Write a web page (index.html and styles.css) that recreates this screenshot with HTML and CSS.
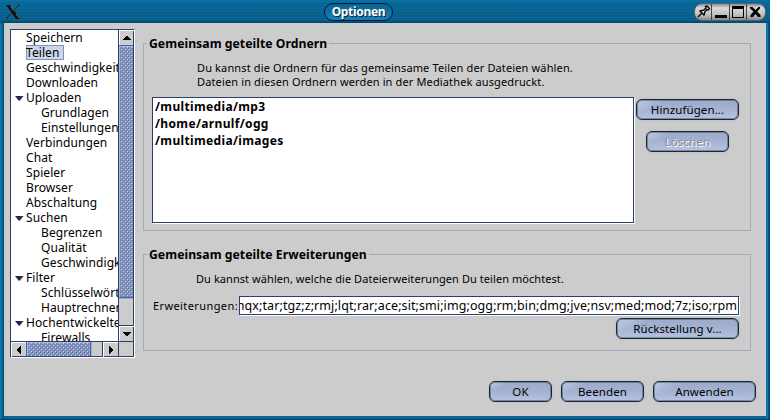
FILE: index.html
```html
<!DOCTYPE html>
<html lang="de">
<head>
<meta charset="utf-8">
<title>Optionen</title>
<link rel="stylesheet" href="styles.css">
</head>
<body>
<div class="window">
  <header class="titlebar">
    <svg class="xlogo" width="14" height="14" viewBox="0 0 14 14"><path d="M0 0h4l10 14h-4z" fill="#111"/><path d="M13 0L8.500 5.500M5.500 8.500L1 13.500" stroke="#111" stroke-width="1.300" fill="none"/><path d="M4.500 1L8 6M1.500 13.500L5.500 9M12.500 1L9 5M10 9l3 4" stroke="#8a8280" stroke-width=".7" fill="none"/></svg>
    <h1 class="title">Optionen</h1>
    <div class="controls">
      <span class="control pin"><svg width="15" height="15" viewBox="0 0 15 15"><path d="M2 13L6 9M3.500 6.500l5 5M4.500 7L8 6l2-2L9.500 2.500 11 2l2.500 2.500-1 1.500-1.500-.5-2 2L8 11" fill="#ddd" stroke="#000" stroke-width="1.400"/></svg></span>
      <span class="control"><svg width="15" height="15" viewBox="0 0 15 15" shape-rendering="crispEdges"><path d="M2 11h12v3H2z"/></svg></span>
      <span class="control"><svg width="15" height="15" viewBox="0 0 15 15" shape-rendering="crispEdges"><path d="M1 2h12v12H1zM2 5v8h10V5z" fill-rule="evenodd"/></svg></span>
      <span class="control close"><svg width="15" height="15" viewBox="0 0 15 15"><path d="M2 3h2.500L7.500 6l3-3H12v1.500L9.200 7.500 12.500 11v2H10L7.500 10 5 13H2.500v-2L5.500 7.500 2 4.500z"/></svg></span>
    </div>
  </header>
  <main class="content">
    <nav class="tree">
      <ul class="items">
        <li>Speichern</li>
        <li><span class="selected">Teilen</span></li>
        <li>Geschwindigkeit</li>
        <li>Downloaden</li>
        <li class="open">Uploaden</li>
        <li class="child">Grundlagen</li>
        <li class="child">Einstellungen</li>
        <li>Verbindungen</li>
        <li>Chat</li>
        <li>Spieler</li>
        <li>Browser</li>
        <li>Abschaltung</li>
        <li class="open">Suchen</li>
        <li class="child">Begrenzen</li>
        <li class="child">Qualität</li>
        <li class="child">Geschwindigkeit</li>
        <li class="open">Filter</li>
        <li class="child">Schlüsselwörter</li>
        <li class="child">Hauptrechner</li>
        <li class="open">Hochentwickelte</li>
        <li class="child">Firewalls</li>
      </ul>
      <div class="vbar">
        <span class="arrow"><svg width="8" height="4" viewBox="0 0 8 4" shape-rendering="crispEdges"><path d="M3 0h2v1h1v1h1v1h1v1H0V3h1V2h1V1h1z"/></svg></span>
        <span class="thumb"></span>
        <span class="track"></span>
        <span class="arrow"><svg width="8" height="4" viewBox="0 0 8 4" shape-rendering="crispEdges"><path d="M0 0h8v1H7v1H6v1H5v1H3V3H2V2H1V1H0z"/></svg></span>
      </div>
      <div class="hbar">
        <span class="arrow"><svg width="4" height="8" viewBox="0 0 4 8" shape-rendering="crispEdges"><path d="M3 0h1v8H3V7H2V6H1V5H0V3h1V2h1V1h1z"/></svg></span>
        <span class="thumb"></span>
        <span class="track"></span>
        <span class="arrow"><svg width="4" height="8" viewBox="0 0 4 8" shape-rendering="crispEdges"><path d="M0 0h1v1h1v1h1v1h1v2H3v1H2v1H1v1H0z"/></svg></span>
      </div>
      <div class="corner"></div>
    </nav>
    <section class="panels">
      <fieldset class="group folders">
        <legend>Gemeinsam geteilte Ordnern</legend>
        <p class="hint">Du kannst die Ordnern für das gemeinsame Teilen der Dateien wählen.<br>Dateien in diesen Ordnern werden in der Mediathek ausgedruckt.</p>
        <div class="folder-row">
          <ul class="list">
            <li>/multimedia/mp3</li>
            <li>/home/arnulf/ogg</li>
            <li>/multimedia/images</li>
          </ul>
          <div class="side">
            <button class="button wide">Hinzufügen...</button>
            <button class="button" disabled>Löschen</button>
          </div>
        </div>
      </fieldset>
      <fieldset class="group extensions">
        <legend>Gemeinsam geteilte Erweiterungen</legend>
        <p class="hint">Du kannst wählen, welche die Dateierweiterungen Du teilen möchtest.</p>
        <div class="field-row">
          <span class="label">Erweiterungen:</span>
          <div class="field"><span>hqx;tar;tgz;z;rmj;lqt;rar;ace;sit;smi;img;ogg;rm;bin;dmg;jve;nsv;med;mod;7z;iso;rpm</span></div>
        </div>
        <div class="reset"><button class="button widest">Rückstellung v...</button></div>
      </fieldset>
      <footer class="actions">
        <button class="button small">OK</button>
        <button class="button">Beenden</button>
        <button class="button wide">Anwenden</button>
      </footer>
    </section>
  </main>
</div>
</body>
</html>
```
FILE: styles.css
```css
* { box-sizing: border-box; }
body { margin: 0; font-family: "Noto Sans", "Open Sans", sans-serif; font-size: 11px; color: #000; }
ul { list-style: none; margin: 0; padding: 0; }
svg { display: block; }
.window { width: 770px; height: 420px; background: linear-gradient(90deg, #087bb0 0 1px, #086596 1px 3px, #004c70 3px 4px, #086596 4px 766px, #0878ad 766px 768px, #00537d 768px); border-bottom: 1px solid #003c5b; overflow: hidden; }
.titlebar { height: 23px; display: grid; grid-template-columns: 318px auto 1fr; background: repeating-linear-gradient(rgba(0,0,0,.05) 0 1px, transparent 1px 3px), linear-gradient(#087bb0 0, #08699b 2px, #09618d 20px, #004868 23px); padding: 3px 4px 0 6px; }
.xlogo { margin-top: 2px; }
.title { margin: 0; width: 69px; height: 18px; border: 1px solid #001946; border-radius: 9px; background: linear-gradient(#09628e, #1781b1); color: #fff; font-size: 12px; line-height: 15px; text-align: center; text-shadow: 1px 1px #002847; letter-spacing: -.3px; }
.controls { justify-self: end; display: flex; width: 72px; height: 18px; background: linear-gradient(#8d8d8d, #dadada 25%, #bdbdbd 70%, #888); border: 1px solid #55656e; border-radius: 8px; overflow: hidden; }
.control { width: 18px; padding-left: 1px; border-right: 1px solid #444; }
.control.pin { width: 17px; }
.control.close { border: 0; }
.content { display: flex; width: 762px; height: 393px; margin-left: 4px; padding: 6px 0 0 6px; background: #ccc; }
.tree { width: 125px; height: 329px; display: grid; grid-template: 311px 16px / 107px 16px; border: 1px solid #2c4070; border-right-color: #fff; border-bottom-color: #fff; background: #ccc; }
.items { background: #fff; overflow: hidden; font-size: 12px; line-height: 15px; white-space: nowrap; letter-spacing: .08px; }
.items li { height: 15px; padding-left: 15px; position: relative; }
.items li.child { padding-left: 30px; }
.items li.open::before { content: ""; position: absolute; left: 4px; top: 6px; border: 4px solid transparent; border-top: 5px solid #26234c; border-bottom: 0; filter: drop-shadow(1px 0 #999); }
.selected { display: block; width: 38px; height: 15px; line-height: 13px; background: #ccd6eb; border: 1px solid #8491b5; text-indent: -1px; }
.arrow { display: flex; align-items: center; justify-content: center; width: 15px; height: 15px; border: 1px solid #fff; border-right: 0; border-bottom: 0; flex: none; }
.vbar { display: flex; flex-direction: column; border-left: 1px solid #2c4070; border-right: 1px solid #2c4070; width: 16px; }
.thumb {
  flex: none;
  border: 1px solid #3c65b4;
  box-shadow: inset 1px 1px #a7b9e0;
  background:
    conic-gradient(from 270deg at 1px 1px, #c9d5ee 25%, transparent 0) 2px 3px / 4px 4px,
    conic-gradient(from 270deg at 1px 1px, #c9d5ee 25%, transparent 0) 4px 5px / 4px 4px,
    conic-gradient(from 270deg at 1px 1px, #5673b6 25%, transparent 0) 3px 4px / 4px 4px,
    conic-gradient(from 270deg at 1px 1px, #5673b6 25%, transparent 0) 5px 6px / 4px 4px,
    #8291b5;
}
.vbar .thumb { height: 253px; border-left: 0; border-right: 0; }
.vbar .track { flex: 1; border-top: 1px solid #a7adbd; border-bottom: 1px solid #2c4070; }
.hbar { display: flex; border-top: 1px solid #2c4070; border-bottom: 1px solid #2c4070; }
.hbar .thumb { width: 65px; height: 14px; border-top: 0; border-bottom: 0; }
.hbar .track { flex: 1; border-left: 1px solid #a7adbd; border-right: 1px solid #2c4070; }
.corner { border: 1px solid #2c4070; }
.panels { width: 613px; margin-left: 8px; }
.group { width: 608px; margin: 0; min-width: 0; border: 1px solid #a5aabb; padding: 0; }
.group legend { margin-left: 3px; padding: 0 2px; height: 16px; font-weight: bold; font-size: 12.200px; line-height: 18px; letter-spacing: .05px; }
.folders { margin-top: 6px; height: 196px; }
.hint { margin: 0; padding-left: 53px; line-height: 14px; white-space: nowrap; letter-spacing: .135px; }
.folders .hint { margin-top: 10px; height: 36px; }
.folder-row { display: flex; padding-left: 8px; }
.list { width: 482px; height: 126px; border: 1px solid #2c4070; padding: 0 0 0 2px; box-shadow: 1px 1px #fff; background: #fff; font-weight: bold; font-size: 12px; line-height: 17px; letter-spacing: .35px; }
.side { width: 103px; margin: 2px 0 0 2px; display: flex; flex-direction: column; align-items: center; gap: 11px; }
.button { display: block; width: 83px; height: 21px; padding: 0; border: 1px solid #20262f; border-radius: 6px; background: linear-gradient(155deg, rgba(225,233,255,.55), transparent 22%), linear-gradient(#9cabc9, #a5b2d2 50%, #b8c3e2); box-shadow: 0 0 2px 1px #bdc5c9, inset 0 0 0 1px rgba(50,64,88,.45); color: #000; font: 11.500px/18px "Noto Sans", sans-serif; text-align: center; white-space: nowrap; letter-spacing: .1px; }
.button:disabled { color: #8e8e8e; text-shadow: 1px 1px #fff; }
.wide { width: 103px; }
.widest { width: 123px; }
.small { width: 63px; }
.extensions { margin-top: 15px; height: 105px; }
.extensions .hint { margin-top: 10px; padding-left: 52px; height: 24px; letter-spacing: .065px; }
.field-row { display: flex; padding-left: 9px; }
.label { width: 86px; line-height: 19px; letter-spacing: .4px; }
.field { width: 500px; height: 19px; display: flex; justify-content: flex-end; overflow: hidden; border: 1px solid #2c4070; box-shadow: 1px 1px #fff; background: #fff; font-size: 12.500px; line-height: 17px; white-space: nowrap; padding-right: 1px; letter-spacing: .09px; }
.reset { display: flex; justify-content: flex-end; padding: 3px 11px 0 0; }
.actions { display: flex; justify-content: flex-end; gap: 9px; padding-top: 30px; }
```
